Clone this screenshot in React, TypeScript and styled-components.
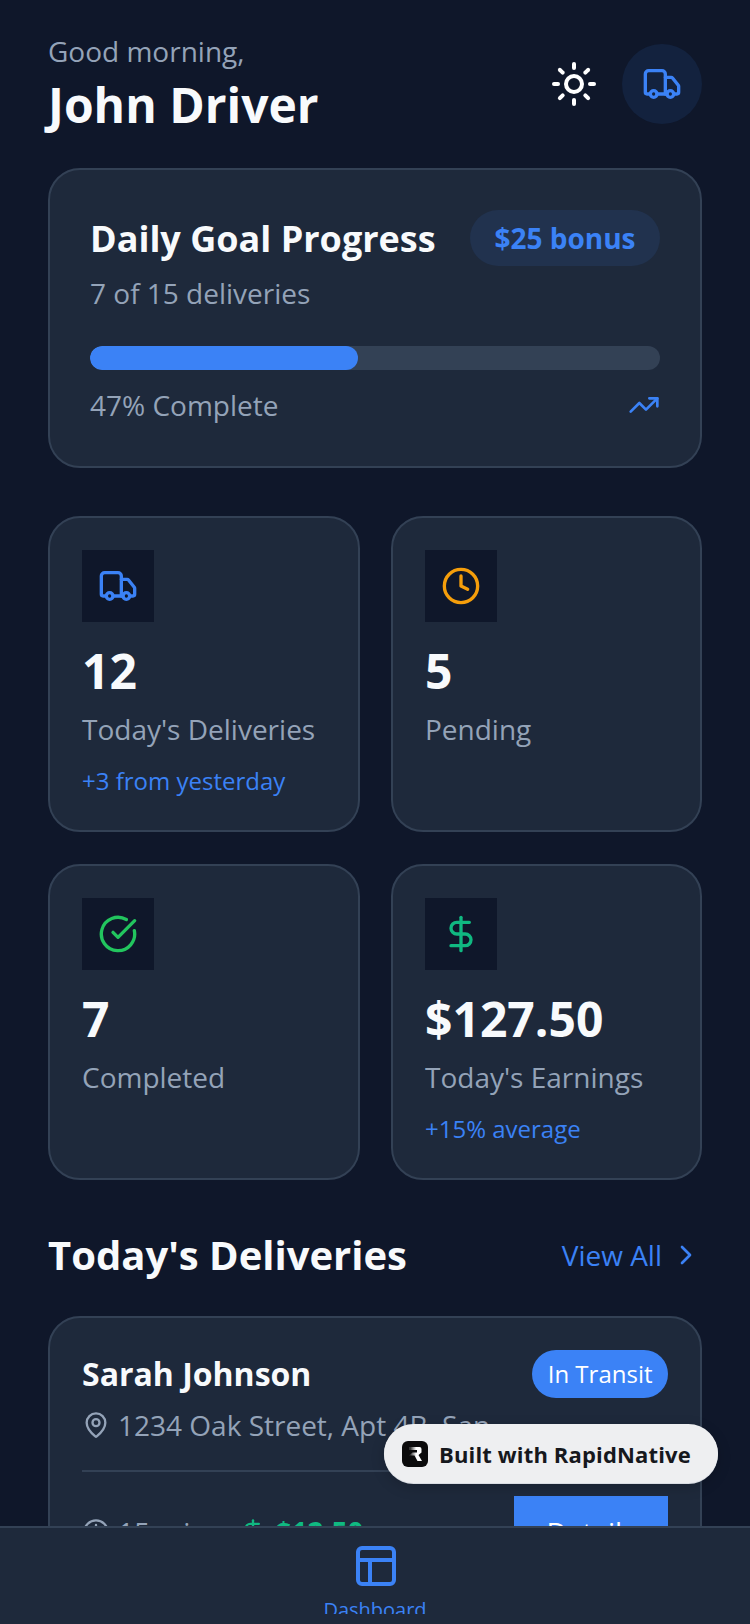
import * as React from 'react';
import styled, { createGlobalStyle } from 'styled-components';
import { Sun, Truck, TrendingUp, Clock, CircleCheckBig, DollarSign, ChevronRight, MapPin, PanelsTopLeft } from 'lucide-react';

const GlobalStyle = createGlobalStyle`
  html, body {
    margin: 0;
    padding: 0;
    background: #0f172a;
  }
  * {
    box-sizing: border-box;
  }
`;

const Screen = styled.div`
  position: relative;
  width: 750px;
  height: 1624px;
  display: flex;
  flex-direction: column;
  overflow: hidden;
  background: #0f172a;
  font-family: "Open Sans", "Liberation Sans", sans-serif;
  color: #f8fafc;
`;

const Scroll = styled.main`
  flex: 1;
  min-height: 0;
  overflow: hidden;
  padding: 32px 48px 0;
`;

const Header = styled.header`
  display: flex;
  align-items: flex-start;
  justify-content: space-between;
  height: 104px;
  margin-bottom: 32px;
`;

const Greeting = styled.div`
  font-size: 28px;
  line-height: 38px;
  color: #94a3b8;
`;

const DriverName = styled.h1`
  margin: 0;
  font-size: 48px;
  line-height: 70px;
  font-weight: 700;
`;

const HeaderActions = styled.div`
  display: flex;
  align-items: center;
  gap: 24px;
  height: 104px;
`;

const Avatar = styled.div`
  width: 80px;
  height: 80px;
  border-radius: 50%;
  background: #13223e;
  display: flex;
  align-items: center;
  justify-content: center;
  color: #3b82f6;
`;

const Card = styled.section`
  background: #1e293b;
  border: 2px solid #334155;
  border-radius: 32px;
`;

const GoalCard = styled(Card)`
  height: 300px;
  padding: 40px;
  margin-bottom: 48px;
`;

const GoalTop = styled.div`
  display: flex;
  justify-content: space-between;
`;

const GoalTitle = styled.h2`
  margin: 0;
  font-size: 36px;
  line-height: 58px;
  font-weight: 700;
`;

const GoalSub = styled.div`
  margin-top: 6px;
  font-size: 28px;
  line-height: 38px;
  color: #94a3b8;
`;

const Bonus = styled.div`
  height: 56px;
  padding: 0 24.5px;
  border-radius: 28px;
  background: #21324e;
  color: #3b82f6;
  font-size: 28px;
  line-height: 56px;
  font-weight: 700;
`;

const Track = styled.div`
  height: 24px;
  margin-top: 34px;
  border-radius: 12px;
  background: #334155;
  overflow: hidden;
`;

const Fill = styled.div`
  height: 100%;
  background: #3b82f6;
  border-radius: 12px;
`;

const GoalFoot = styled.div`
  display: flex;
  align-items: center;
  justify-content: space-between;
  margin-top: 16px;
  color: #94a3b8;
  font-size: 28px;
  line-height: 38px;
`;

const Stats = styled.div`
  display: grid;
  grid-template-columns: 312px 311px;
  grid-auto-rows: 316px;
  column-gap: 31px;
  row-gap: 32px;
  margin-bottom: 47px;
`;

const StatCard = styled(Card)`
  padding: 32px;
`;

const StatIcon = styled.div<{ $color: string }>`
  width: 72px;
  height: 72px;
  display: flex;
  align-items: center;
  justify-content: center;
  background: #0f172a;
  color: ${(p) => p.$color};
  margin-bottom: 16px;
`;

const StatValue = styled.div`
  font-size: 48px;
  line-height: 66px;
  font-weight: 700;
`;

const StatLabel = styled.div`
  font-size: 28px;
  line-height: 38px;
  margin-top: 6px;
  color: #94a3b8;
`;

const StatNote = styled.div`
  font-size: 24px;
  line-height: 32px;
  margin-top: 17px;
  color: #3b82f6;
`;

const SectionHead = styled.div`
  display: flex;
  align-items: center;
  justify-content: space-between;
  margin-bottom: 33px;
`;

const SectionTitle = styled.h2`
  margin: 0;
  font-size: 40px;
  line-height: 56px;
  font-weight: 700;
`;

const ViewAll = styled.div`
  display: flex;
  align-items: center;
  gap: 8px;
  color: #3b82f6;
  font-size: 28px;
  line-height: 38px;
`;

const DeliveryCard = styled(Card)`
  padding: 32px;
`;

const DeliveryTop = styled.div`
  display: flex;
  align-items: center;
  justify-content: space-between;
`;

const CustomerName = styled.div`
  font-size: 32px;
  line-height: 44px;
  font-weight: 700;
`;

const Status = styled.div`
  height: 48px;
  padding: 0 15.5px;
  border-radius: 24px;
  background: #3b82f6;
  color: #fff;
  font-size: 24px;
  line-height: 48px;
`;

const Address = styled.div`
  display: flex;
  align-items: center;
  gap: 8px;
  margin-top: 8px;
  color: #94a3b8;
  font-size: 28px;
  line-height: 38px;
`;

const Divider = styled.div`
  height: 2px;
  margin: 26px 0 24px;
  background: #334155;
`;

const DeliveryFoot = styled.div`
  display: flex;
  align-items: center;
  justify-content: space-between;
`;

const Meta = styled.div`
  display: flex;
  align-items: center;
  gap: 32px;
`;

const MetaItem = styled.div<{ $color: string; $bold?: boolean }>`
  display: flex;
  align-items: center;
  gap: 8px;
  color: ${(p) => p.$color};
  font-size: 28px;
  line-height: 38px;
  font-weight: ${(p) => (p.$bold ? 700 : 400)};
`;

const DetailsButton = styled.div`
  width: 154px;
  height: 72px;
  background: #3b82f6;
  color: #fff;
  font-size: 28px;
  line-height: 72px;
  text-align: center;
`;

const Nav = styled.nav`
  flex: none;
  height: 98px;
  background: #1e293b;
  border-top: 2px solid #334155;
  display: flex;
  flex-direction: column;
  align-items: center;
  padding-top: 16px;
  color: #3b82f6;
`;

const NavIcon = styled(PanelsTopLeft)`
  flex: none;
  margin: -2px 0 0 2px;
`;

const NavLabel = styled.div`
  font-size: 20px;
  line-height: 28px;
  height: 18px;
  margin-top: 6px;
  overflow: hidden;
`;

const Badge = styled.div`
  position: absolute;
  left: 384px;
  top: 1424px;
  width: 334px;
  height: 59px;
  display: flex;
  align-items: center;
  gap: 11px;
  padding-left: 18px;
  border-radius: 30px;
  background: #eeeff1;
  box-shadow: 0 1px 0 #d9dde3, 0 4px 14px rgba(0, 0, 0, 0.18);
  color: #16181d;
  font-size: 22px;
  font-weight: 700;
  letter-spacing: 0.15px;
  white-space: nowrap;
`;

const BadgeLogo = styled.svg`
  width: 26px;
  height: 26px;
  flex: none;
`;

const stats = [
  { icon: Truck, color: '#3b82f6', value: '12', label: "Today's Deliveries", note: '+3 from yesterday' },
  { icon: Clock, color: '#f59e0b', value: '5', label: 'Pending' },
  { icon: CircleCheckBig, color: '#22c55e', value: '7', label: 'Completed' },
  { icon: DollarSign, color: '#10b981', value: '$127.50', label: "Today's Earnings", note: '+15% average' },
];

export default function App() {
  return (
    <Screen>
      <GlobalStyle />
      <Scroll>
        <Header>
          <div>
            <Greeting>Good morning,</Greeting>
            <DriverName>John Driver</DriverName>
          </div>
          <HeaderActions>
            <Sun size={48} color="#ffffff" strokeWidth={2} />
            <Avatar>
              <Truck size={40} />
            </Avatar>
          </HeaderActions>
        </Header>

        <GoalCard>
          <GoalTop>
            <GoalTitle>Daily Goal Progress</GoalTitle>
            <Bonus>$25 bonus</Bonus>
          </GoalTop>
          <GoalSub>7 of 15 deliveries</GoalSub>
          <Track>
            <Fill style={{ width: '47%' }} />
          </Track>
          <GoalFoot>
            47% Complete
            <TrendingUp size={32} color="#3b82f6" />
          </GoalFoot>
        </GoalCard>

        <Stats>
          {stats.map((s) => (
            <StatCard key={s.label}>
              <StatIcon $color={s.color}>
                <s.icon size={40} />
              </StatIcon>
              <StatValue>{s.value}</StatValue>
              <StatLabel>{s.label}</StatLabel>
              {s.note && <StatNote>{s.note}</StatNote>}
            </StatCard>
          ))}
        </Stats>

        <SectionHead>
          <SectionTitle>Today's Deliveries</SectionTitle>
          <ViewAll>
            View All
            <ChevronRight size={32} />
          </ViewAll>
        </SectionHead>

        <DeliveryCard>
          <DeliveryTop>
            <CustomerName>Sarah Johnson</CustomerName>
            <Status>In Transit</Status>
          </DeliveryTop>
          <Address>
            <MapPin size={28} />
            1234 Oak Street, Apt 4B, San...
          </Address>
          <Divider />
          <DeliveryFoot>
            <Meta>
              <MetaItem $color="#94a3b8">
                <Clock size={28} />
                15 min
              </MetaItem>
              <MetaItem $color="#10b981" $bold>
                <DollarSign size={28} />
                $12.50
              </MetaItem>
            </Meta>
            <DetailsButton>Details</DetailsButton>
          </DeliveryFoot>
        </DeliveryCard>
      </Scroll>

      <Nav>
        <NavIcon size={48} />
        <NavLabel>Dashboard</NavLabel>
      </Nav>

      <Badge>
        <BadgeLogo viewBox="0 0 26 26">
          <defs>
            <linearGradient id="rn" x1="0" x2="1" y1="0" y2="0">
              <stop offset="0.1" stopColor="#333" />
              <stop offset="0.55" stopColor="#fff" />
            </linearGradient>
          </defs>
          <rect width="26" height="26" rx="6" fill="#0b0b0c" />
          <path d="M7 6h10.5a2 2 0 0 1 2 2v3.5l-3 2.5 3.5 6h-4.5l-3-5.5H7l3.5-3h4.5V9H7z" fill="url(#rn)" />
        </BadgeLogo>
        Built with RapidNative
      </Badge>
    </Screen>
  );
}
